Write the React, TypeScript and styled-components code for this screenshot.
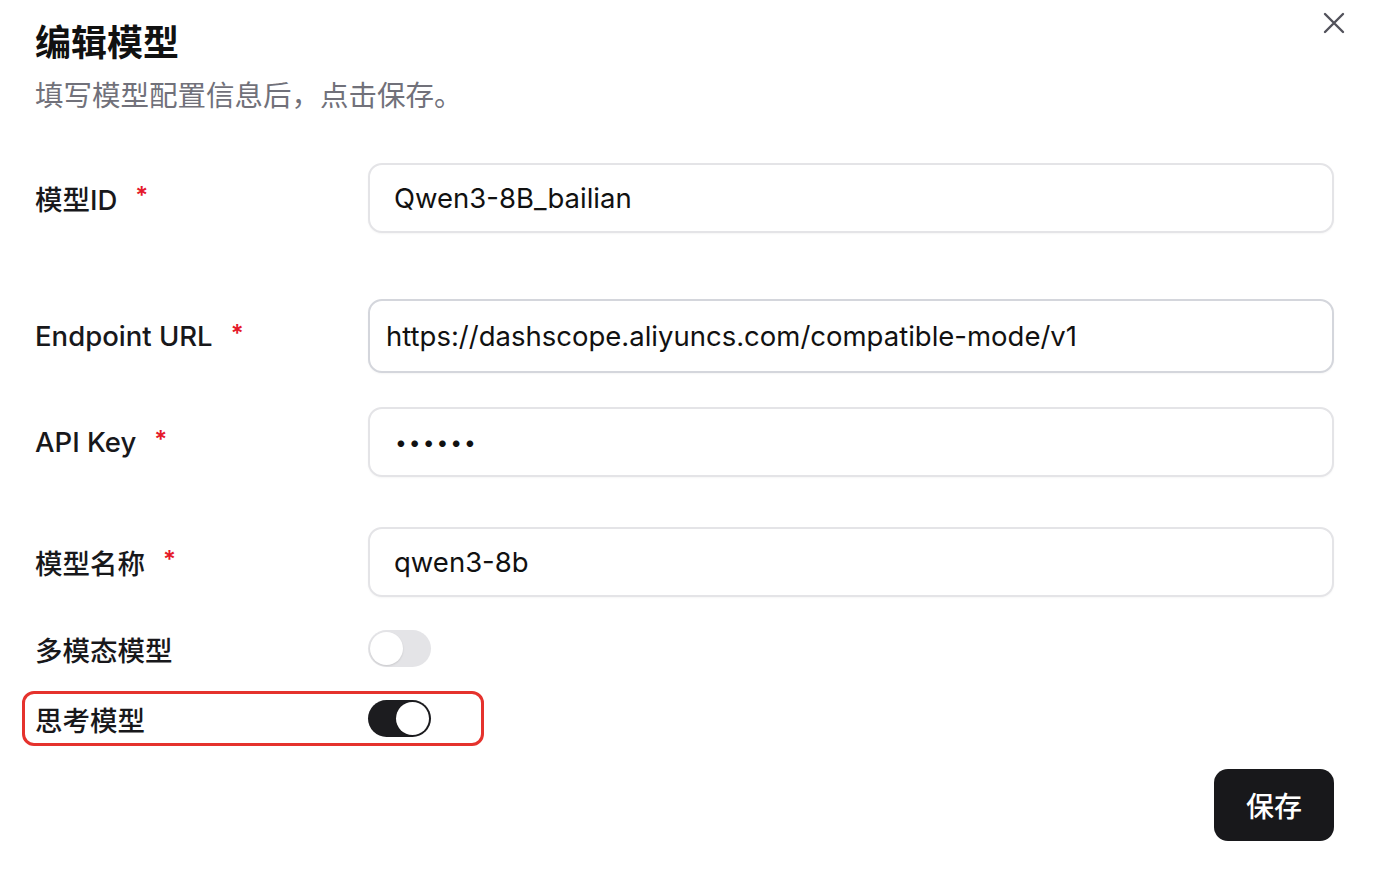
import React from "react";
import styled, { createGlobalStyle } from "styled-components";

const GlobalStyle = createGlobalStyle`
  html, body { margin: 0; padding: 0; background: #ffffff; }
  body { font-family: Inter, "Noto Sans CJK SC", "Noto Sans", sans-serif; color: #18181b; }
  *, *::before, *::after { box-sizing: border-box; }
`;

const Dialog = styled.div`
  position: relative;
  width: 1374px;
  height: 880px;
  padding: 18px 40px 0 35px;
  display: flex;
  flex-direction: column;
`;

const CloseButton = styled.button`
  position: absolute;
  top: 10px;
  right: 27px;
  width: 26px;
  height: 26px;
  border: none;
  background: transparent;
  padding: 0;
  display: flex;
  align-items: center;
  justify-content: center;
  color: #52525b;
  cursor: pointer;
`;

const Title = styled.h1`
  margin: 0;
  font-size: 36px;
  line-height: 44px;
  font-weight: 700;
  color: #111111;
  font-family: "Noto Sans CJK SC", sans-serif;
`;

const Subtitle = styled.p`
  margin: 12px 0 0;
  font-size: 28.5px;
  line-height: 40px;
  color: #71717a;
  font-family: "Noto Sans CJK SC", sans-serif;
`;

const Form = styled.div`
  display: flex;
  flex-direction: column;
  margin-top: 49px;
`;

const Row = styled.div<{ $gap: number }>`
  display: grid;
  grid-template-columns: 333px 1fr;
  align-items: center;
  margin-top: ${(p) => p.$gap}px;
`;

const Label = styled.label`
  display: flex;
  align-items: center;
  font-size: 27.5px;
  font-weight: 500;
  color: #18181b;
  font-family: Inter, "Noto Sans CJK SC", sans-serif;
`;

const Required = styled.span`
  color: #e5192b;
  font-size: 24px;
  margin-left: 18px;
  position: relative;
  top: -3px;
  font-weight: 600;
`;

const Input = styled.input<{ $height: number; $pad: number; $focused?: boolean; $mask?: boolean }>`
  width: 100%;
  height: ${(p) => p.$height}px;
  border: 2px solid ${(p) => (p.$focused ? "#d4d6dc" : "#e4e4e7")};
  border-radius: 14px;
  padding: 0 16px 0 ${(p) => p.$pad}px;
  font-size: ${(p) => (p.$mask ? "21px" : "27.5px")};
  letter-spacing: ${(p) => (p.$mask ? "2px" : "0")};
  font-family: Inter, "Noto Sans CJK SC", sans-serif;
  color: #111111;
  background: #ffffff;
  outline: none;
  box-shadow: 0 1px 2px rgba(0, 0, 0, 0.04);
`;

const ToggleRow = styled.div<{ $gap: number; $highlight?: boolean }>`
  position: relative;
  display: grid;
  grid-template-columns: 333px 63px;
  align-items: center;
  margin-top: ${(p) => p.$gap}px;
  width: 396px;

  ${(p) =>
    p.$highlight &&
    `
    &::after {
      content: "";
      position: absolute;
      left: -13px;
      top: -9px;
      width: 462px;
      height: 55px;
      border: 3px solid #e5322d;
      border-radius: 12px;
      pointer-events: none;
    }
  `}
`;

const ToggleLabel = styled.span`
  font-size: 27.5px;
  line-height: 36px;
  font-weight: 500;
  font-family: "Noto Sans CJK SC", sans-serif;
  color: #18181b;
`;

const Switch = styled.button<{ $on: boolean }>`
  width: 63px;
  height: 37px;
  border-radius: 19px;
  border: none;
  padding: 2px;
  background: ${(p) => (p.$on ? "#1c1c1f" : "#e4e4e7")};
  display: flex;
  justify-content: ${(p) => (p.$on ? "flex-end" : "flex-start")};
  align-items: center;
  cursor: pointer;
`;

const Thumb = styled.span`
  width: 33px;
  height: 33px;
  border-radius: 50%;
  background: #ffffff;
  box-shadow: 0 1px 2px rgba(0, 0, 0, 0.12);
`;

const Footer = styled.div`
  display: flex;
  justify-content: flex-end;
  margin-top: 32px;
`;

const SaveButton = styled.button`
  width: 120px;
  height: 72px;
  border: none;
  border-radius: 14px;
  background: #18181b;
  color: #ffffff;
  font-size: 28px;
  font-family: "Noto Sans CJK SC", sans-serif;
  font-weight: 500;
  cursor: pointer;
`;

const fields = [
  { label: "模型ID", value: "Qwen3-8B_bailian", gap: 0, height: 70, pad: 24 },
  {
    label: "Endpoint URL",
    value: "https://dashscope.aliyuncs.com/compatible-mode/v1",
    gap: 66,
    height: 74,
    pad: 16,
    focused: true,
  },
  { label: "API Key", value: "123456", gap: 34, height: 70, pad: 25, password: true },
  { label: "模型名称", value: "qwen3-8b", gap: 50, height: 70, pad: 24 },
];

export default function App() {
  return (
    <>
      <GlobalStyle />
      <Dialog>
        <CloseButton aria-label="关闭">
          <svg width="22" height="22" viewBox="0 0 22 22" fill="none">
            <path d="M2 2L20 20M20 2L2 20" stroke="currentColor" strokeWidth="2.4" strokeLinecap="round" />
          </svg>
        </CloseButton>
        <Title>编辑模型</Title>
        <Subtitle>填写模型配置信息后，点击保存。</Subtitle>
        <Form>
          {fields.map((f) => (
            <Row key={f.label} $gap={f.gap}>
              <Label>
                {f.label}
                <Required>*</Required>
              </Label>
              <Input
                readOnly
                type={f.password ? "password" : "text"}
                defaultValue={f.value}
                $height={f.height}
                $pad={f.pad}
                $focused={f.focused}
                $mask={f.password}
              />
            </Row>
          ))}
          <ToggleRow $gap={33}>
            <ToggleLabel>多模态模型</ToggleLabel>
            <Switch $on={false}>
              <Thumb />
            </Switch>
          </ToggleRow>
          <ToggleRow $gap={33} $highlight>
            <ToggleLabel>思考模型</ToggleLabel>
            <Switch $on={true}>
              <Thumb />
            </Switch>
          </ToggleRow>
          <Footer>
            <SaveButton>保存</SaveButton>
          </Footer>
        </Form>
      </Dialog>
    </>
  );
}
